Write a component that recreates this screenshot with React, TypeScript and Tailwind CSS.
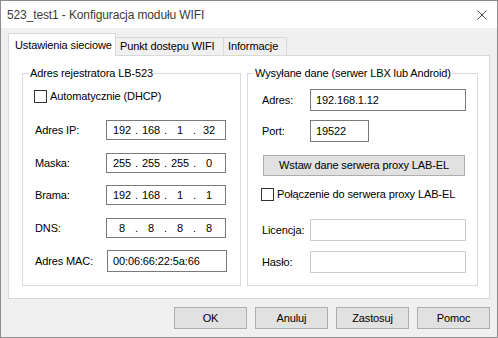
import React from "react"

function IpField({ parts }: { parts: string[] }) {
	return (
		<div className="flex h-[20px] w-[120px] items-center border border-[#7a7a7a] bg-white pl-[4px]">
			{parts.map((p, i) => (
				<React.Fragment key={i}>
					<span className="w-[22px] text-center">{p}</span>
					{i < 3 && <span className="w-[7px] text-center">.</span>}
				</React.Fragment>
			))}
		</div>
	)
}

function Checkbox({ label }: { label: string }) {
	return (
		<div className="flex h-[14px] items-center">
			<span className="mr-[3px] h-[13px] w-[13px] border border-[#333] bg-white" />
			<span>{label}</span>
		</div>
	)
}

const ipRows = [
	{ label: "Adres IP:", parts: ["192", "168", "1", "32"], mt: "mt-[17px]" },
	{ label: "Maska:", parts: ["255", "255", "255", "0"], mt: "mt-[13px]" },
	{ label: "Brama:", parts: ["192", "168", "1", "1"], mt: "mt-[12px]" },
	{ label: "DNS:", parts: ["8", "8", "8", "8"], mt: "mt-[13px]" },
]

export default function App() {
	return (
		<div className="flex h-[338px] w-[498px] flex-col border border-[#8c8c8c] bg-[#f0f0f0] font-['Liberation_Sans',Arial,sans-serif] text-[11px] tracking-[-0.12px] text-black">
			{/* Title bar */}
			<div className="flex h-[27px] items-center justify-between bg-white pl-[6px] pr-[10px] text-[12px] text-[#3c3c3c]">
				<span>523_test1 - Konfiguracja modułu WIFI</span>
				<svg width="10" height="10" viewBox="0 0 10 10">
					<path d="M0.5 0.5 L9.5 9.5 M9.5 0.5 L0.5 9.5" stroke="#555" strokeWidth="1" fill="none" />
				</svg>
			</div>

			<div className="flex flex-1 flex-col px-[7px] pt-[5px]">
				{/* Tabs */}
				<div className="relative z-10 -mb-px flex h-[23px] items-end">
					<div className="flex h-[23px] w-[108px] items-center border border-b-0 border-[#d9d9d9] bg-white pl-[6px]">
						Ustawienia sieciowe
					</div>
					<div className="flex h-[19px] w-[108px] items-center border border-l-0 border-[#d9d9d9] bg-[#f0f0f0] pl-[4px]">
						Punkt dostępu WIFI
					</div>
					<div className="flex h-[19px] w-[63px] items-center border border-l-0 border-[#d9d9d9] bg-[#f0f0f0] pl-[4px]">
						Informacje
					</div>
				</div>

				{/* Panel */}
				<div className="flex h-[244px] gap-[6px] border border-[#d9d9d9] bg-white pb-[12px] pl-[13px] pr-[11px] pt-[9px]">
					<fieldset className="w-[219px] border border-[#dcdcdc]">
						<legend className="ml-[6px] px-[1px] leading-[16px]">Adres rejestratora LB-523</legend>
						<div className="flex flex-col pl-[12px] pt-[8px]">
							<div className="-ml-px">
								<Checkbox label="Automatycznie (DHCP)" />
							</div>
							{ipRows.map((r) => (
								<div key={r.label} className={`flex h-[20px] items-center ${r.mt}`}>
									<span className="w-[71px]">{r.label}</span>
									<IpField parts={r.parts} />
								</div>
							))}
							<div className="mt-[12px] flex h-[22px] items-center">
								<span className="w-[72px]">Adres MAC:</span>
								<div className="flex h-[22px] w-[120px] items-center border border-[#7a7a7a] bg-white pl-[5px]">
									00:06:66:22:5a:66
								</div>
							</div>
						</div>
					</fieldset>

					<fieldset className="w-[231px] border border-[#dcdcdc]">
						<legend className="ml-[6px] px-[1px] leading-[16px]">Wysyłane dane (serwer LBX lub Android)</legend>
						<div className="flex flex-col pl-[14px] pt-[8px]">
							<div className="flex h-[22px] items-center">
								<span className="w-[48px]">Adres:</span>
								<div className="flex h-[22px] w-[156px] items-center border border-[#7a7a7a] bg-white pl-[5px]">
									192.168.1.12
								</div>
							</div>
							<div className="mt-[9px] flex h-[22px] items-center">
								<span className="w-[48px]">Port:</span>
								<div className="flex h-[22px] w-[59px] items-center border border-[#7a7a7a] bg-white pl-[5px]">
									19522
								</div>
							</div>
							<button className="ml-px mt-[13px] flex h-[21px] w-[202px] items-center justify-center border border-[#adadad] bg-[#e1e1e1]">
								Wstaw dane serwera proxy LAB-EL
							</button>
							<div className="-ml-px mt-[11px]">
								<Checkbox label="Połączenie do serwera proxy LAB-EL" />
							</div>
							<div className="mt-[18px] flex h-[22px] items-center">
								<span className="w-[48px]">Licencja:</span>
								<div className="h-[22px] w-[156px] border border-[#cccccc] bg-white" />
							</div>
							<div className="mt-[10px] flex h-[22px] items-center">
								<span className="w-[48px]">Hasło:</span>
								<div className="h-[22px] w-[156px] border border-[#cccccc] bg-white" />
							</div>
						</div>
					</fieldset>
				</div>

				{/* Dialog buttons */}
				<div className="mt-[8px] flex justify-end gap-[8px]">
					{["OK", "Anuluj", "Zastosuj", "Pomoc"].map((b) => (
						<button
							key={b}
							className="flex h-[22px] w-[73px] items-center justify-center border border-[#adadad] bg-[#e1e1e1]"
						>
							{b}
						</button>
					))}
				</div>
			</div>
		</div>
	)
}
